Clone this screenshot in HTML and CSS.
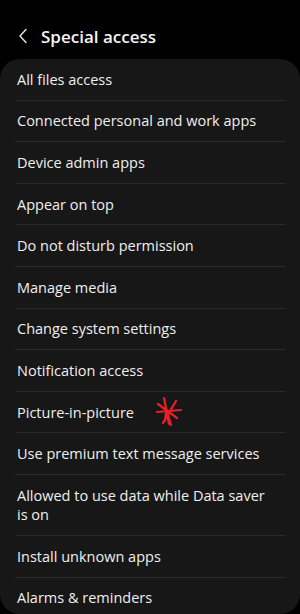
FILE: index.html
```html
<!DOCTYPE html>
<html>
<head>
<meta charset="utf-8">
<link rel="stylesheet" href="styles.css">
</head>
<body>
<header class="top">
  <svg class="back" width="10" height="16" viewBox="0 0 10 16"><path d="M8 1.5 L2 8 L8 14.5" fill="none" stroke="#e6e6e6" stroke-width="1.4" stroke-linecap="round" stroke-linejoin="round"/></svg>
  <h1 class="title">Special access</h1>
</header>
<main class="card">
  <div class="row">All files access</div>
  <div class="row">Connected personal and work apps</div>
  <div class="row">Device admin apps</div>
  <div class="row">Appear on top</div>
  <div class="row">Do not disturb permission</div>
  <div class="row">Manage media</div>
  <div class="row">Change system settings</div>
  <div class="row">Notification access</div>
  <div class="row pip">Picture-in-picture
    <svg class="mark" width="28" height="32" viewBox="0 0 28 32"><g stroke="#e8202a" stroke-width="2.2" stroke-linecap="round" fill="none"><path d="M9 2 L14 28"/><path d="M3 8 L22 22"/><path d="M2 16 L26 14"/><path d="M21 5 L8 27"/><path d="M12 15 L16 29"/><path d="M11 16 L10 25"/></g></svg>
  </div>
  <div class="row">Use premium text message services</div>
  <div class="row two">Allowed to use data while Data saver is on</div>
  <div class="row">Install unknown apps</div>
  <div class="row last">Alarms &amp; reminders</div>
</main>
</body>
</html>
```
FILE: styles.css
```css
html, body {
  margin: 0;
  padding: 0;
  background: #000;
  width: 300px;
  height: 614px;
  overflow: hidden;
  font-family: "Open Sans", "Liberation Sans", sans-serif;
  color: #f0f0f0;
}
.top {
  height: 59px;
  display: flex;
  align-items: center;
  padding: 13px 0 0 18px;
  box-sizing: border-box;
  gap: 13px;
}
.back {
  display: block;
}
.title {
  margin: 0;
  font-size: 17px;
  font-weight: 600;
  color: #f4f4f4;
}
.card {
  background: #171717;
  border-radius: 20px;
  padding: 0 15px;
  height: 555px;
  overflow: hidden;
}
.row {
  position: relative;
  height: 40.6px;
  display: flex;
  align-items: center;
  padding-left: 2px;
  border-bottom: 1px solid #2a2a2a;
  font-size: 14.5px;
  color: #efefef;
}
.row.two {
  height: 60px;
  line-height: 19px;
  padding-right: 10px;
}
.row.last {
  border-bottom: none;
}
.mark {
  position: absolute;
  left: 140px;
  top: 4px;
}
```
